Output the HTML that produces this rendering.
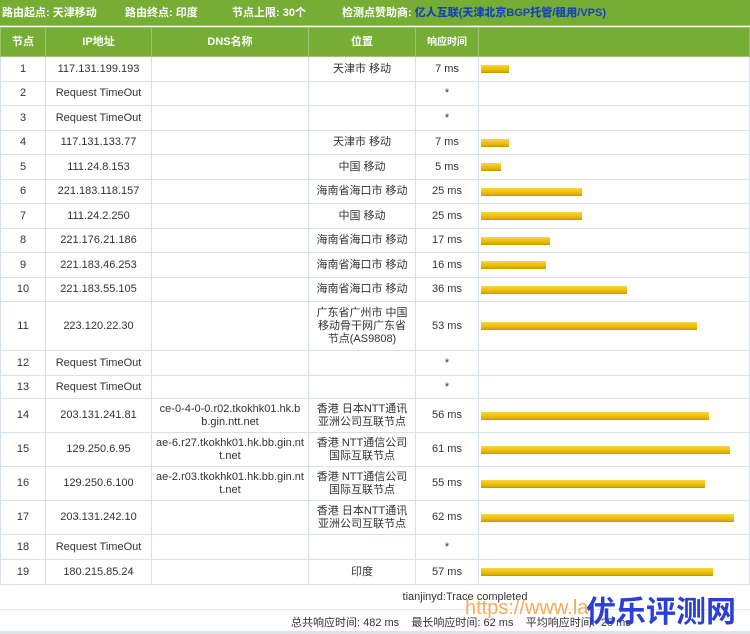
<!DOCTYPE html>
<html><head><meta charset="utf-8"><style>
*{margin:0;padding:0;box-sizing:border-box}
body{width:750px;height:634px;background:#fff;font-family:"Liberation Sans","Noto Sans CJK SC",sans-serif;font-size:11px;color:#333;position:relative;overflow:hidden}
.top{position:absolute;left:0;top:0;width:750px;height:26px;background:#76ae35;color:#fff;font-size:11px;font-weight:bold;line-height:26px;border-bottom:1px solid #a6cc7c}
.top span{position:absolute;top:0;white-space:nowrap}
table{position:absolute;left:0;top:27px;width:750px;border-collapse:collapse;table-layout:fixed}
td,th{border:1px solid #d6e0e8;text-align:center;vertical-align:middle;line-height:13px;padding:0 4px;font-weight:normal}
th{background:#76ae35;color:#fff;border-color:#9cc46e;font-weight:bold;height:29px;font-size:11px}
.bar{text-align:left;padding-left:2px}
.bar i{display:block;height:8px;background:linear-gradient(#f7d64a,#f0bf00 60%,#d9a800);border-bottom:1px solid #c89c00}
.foot{position:absolute;left:0;width:750px;text-align:center}
</style></head><body>
<div class="top">
<span style="left:2px">路由起点: 天津移动</span>
<span style="left:125px">路由终点: 印度</span>
<span style="left:232px">节点上限: 30个</span>
<span style="left:342px">检测点赞助商: <b style="color:#1544b8">亿人互联(天津北京BGP托管/租用/VPS)</b></span>
</div>
<table>
<colgroup><col style="width:45px"><col style="width:106px"><col style="width:157px"><col style="width:107px"><col style="width:63px"><col></colgroup>
<tr><th>节点</th><th>IP地址</th><th>DNS名称</th><th>位置</th><th style="font-size:10px">响应时间</th><th></th></tr>
<tr style="height:25px"><td>1</td><td>117.131.199.193</td><td></td><td>天津市 移动</td><td>7 ms</td><td class="bar"><i style="width:28px"></i></td></tr>
<tr style="height:24px"><td>2</td><td>Request TimeOut</td><td></td><td></td><td>*</td><td></td></tr>
<tr style="height:25px"><td>3</td><td>Request TimeOut</td><td></td><td></td><td>*</td><td></td></tr>
<tr style="height:24px"><td>4</td><td>117.131.133.77</td><td></td><td>天津市 移动</td><td>7 ms</td><td class="bar"><i style="width:28px"></i></td></tr>
<tr style="height:25px"><td>5</td><td>111.24.8.153</td><td></td><td>中国 移动</td><td>5 ms</td><td class="bar"><i style="width:20px"></i></td></tr>
<tr style="height:24px"><td>6</td><td>221.183.118.157</td><td></td><td>海南省海口市 移动</td><td>25 ms</td><td class="bar"><i style="width:101px"></i></td></tr>
<tr style="height:25px"><td>7</td><td>111.24.2.250</td><td></td><td>中国 移动</td><td>25 ms</td><td class="bar"><i style="width:101px"></i></td></tr>
<tr style="height:24px"><td>8</td><td>221.176.21.186</td><td></td><td>海南省海口市 移动</td><td>17 ms</td><td class="bar"><i style="width:69px"></i></td></tr>
<tr style="height:25px"><td>9</td><td>221.183.46.253</td><td></td><td>海南省海口市 移动</td><td>16 ms</td><td class="bar"><i style="width:65px"></i></td></tr>
<tr style="height:24px"><td>10</td><td>221.183.55.105</td><td></td><td>海南省海口市 移动</td><td>36 ms</td><td class="bar"><i style="width:146px"></i></td></tr>
<tr style="height:49px"><td>11</td><td>223.120.22.30</td><td></td><td>广东省广州市 中国移动骨干网广东省节点(AS9808)</td><td>53 ms</td><td class="bar"><i style="width:216px"></i></td></tr>
<tr style="height:25px"><td>12</td><td>Request TimeOut</td><td></td><td></td><td>*</td><td></td></tr>
<tr style="height:23px"><td>13</td><td>Request TimeOut</td><td></td><td></td><td>*</td><td></td></tr>
<tr style="height:34px"><td>14</td><td>203.131.241.81</td><td style="word-break:break-all">ce-0-4-0-0.r02.tkokhk01.hk.bb.gin.ntt.net</td><td>香港 日本NTT通讯亚洲公司互联节点</td><td>56 ms</td><td class="bar"><i style="width:228px"></i></td></tr>
<tr style="height:34px"><td>15</td><td>129.250.6.95</td><td style="word-break:break-all">ae-6.r27.tkokhk01.hk.bb.gin.ntt.net</td><td>香港 NTT通信公司国际互联节点</td><td>61 ms</td><td class="bar"><i style="width:249px"></i></td></tr>
<tr style="height:34px"><td>16</td><td>129.250.6.100</td><td style="word-break:break-all">ae-2.r03.tkokhk01.hk.bb.gin.ntt.net</td><td>香港 NTT通信公司国际互联节点</td><td>55 ms</td><td class="bar"><i style="width:224px"></i></td></tr>
<tr style="height:34px"><td>17</td><td>203.131.242.10</td><td></td><td>香港 日本NTT通讯亚洲公司互联节点</td><td>62 ms</td><td class="bar"><i style="width:253px"></i></td></tr>
<tr style="height:25px"><td>18</td><td>Request TimeOut</td><td></td><td></td><td>*</td><td></td></tr>
<tr style="height:25px"><td>19</td><td>180.215.85.24</td><td></td><td>印度</td><td>57 ms</td><td class="bar"><i style="width:232px"></i></td></tr>
</table>
<div class="foot" style="top:591px;left:90px">tianjinyd:Trace completed</div>
<div style="position:absolute;left:0;top:609px;width:750px;border-top:1px solid #e3e8ec"></div>
<div style="position:absolute;left:465px;top:597px;font-size:20px;color:#f0a040;opacity:.85;white-space:nowrap">https://www.la</div>
<div style="position:absolute;left:291px;top:614px;font-size:11px;white-space:nowrap">总共响应时间: 482 ms &nbsp;&nbsp; 最长响应时间: 62 ms &nbsp;&nbsp; 平均响应时间: &nbsp;25 ms</div>
<div style="position:absolute;left:586px;top:592px;font-size:30px;font-weight:bold;color:#2a3ed8;font-family:'Noto Sans CJK SC',sans-serif;line-height:34px;white-space:nowrap">优乐评测网</div>
<div style="position:absolute;left:0;top:631px;width:750px;height:3px;background:#dde3e8"></div>
</body></html>
